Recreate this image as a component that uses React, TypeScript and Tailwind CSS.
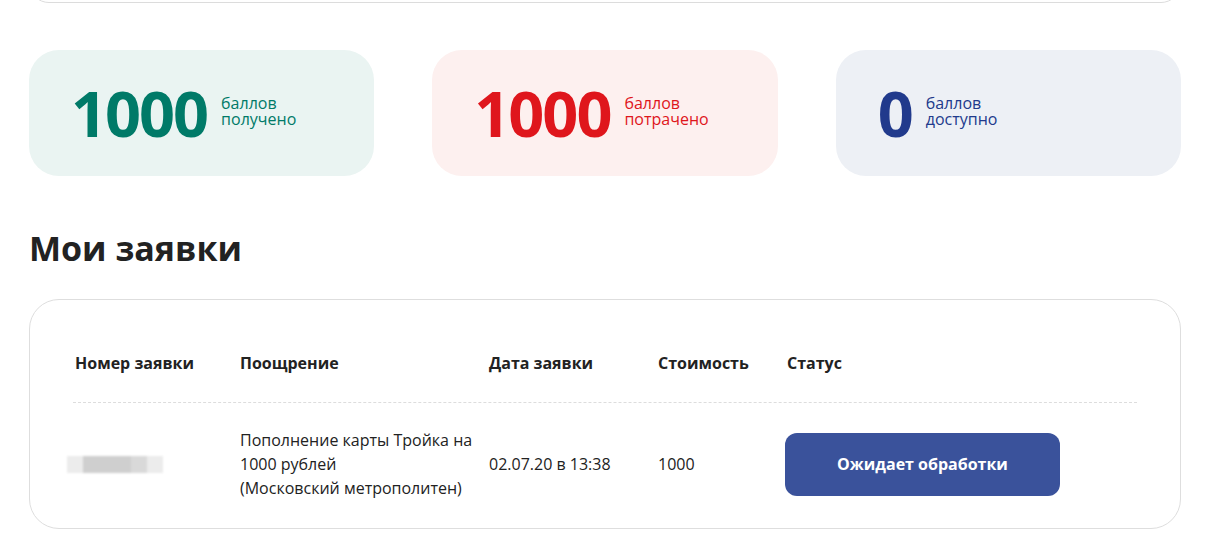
import React from 'react';

const stats = [
  { value: '1000', top: 'баллов', bottom: 'получено', bg: 'bg-[#eaf4f2]', color: 'text-[#007a68]' },
  { value: '1000', top: 'баллов', bottom: 'потрачено', bg: 'bg-[#fdf0ef]', color: 'text-[#df161c]' },
  { value: '0', top: 'баллов', bottom: 'доступно', bg: 'bg-[#edf0f5]', color: 'text-[#213a8c]' },
];

function StatCard({ value, top, bottom, bg, color }: (typeof stats)[number]) {
  return (
    <div className={`h-[126px] rounded-[30px] ${bg} flex items-center pl-[42px]`}>
      <div className={`flex items-start ${color}`}>
        <span className="text-[63px] leading-[64px] font-bold tracking-[-2px]">{value}</span>
        <span className="ml-[14px] mt-[14px] text-[16px] leading-[16px]">
          {top}
          <br />
          {bottom}
        </span>
      </div>
    </div>
  );
}

export default function App() {
  return (
    <div className="min-h-screen bg-white font-['Open_Sans',sans-serif] text-[#222]">
      <div className="pl-[29px] pr-[34px] w-[1215px]">
        <div className="h-[3px] overflow-hidden">
          <div className="h-[40px] -mt-[37px] border border-[#dcdcdc] rounded-[30px]" />
        </div>

        <div className="mt-[47px] grid grid-cols-3 gap-[58px]">
          {stats.map((s, i) => (
            <StatCard key={i} {...s} />
          ))}
        </div>

        <h2 className="mt-[51px] text-[34px] leading-[42px] font-bold text-[#222]">Мои заявки</h2>

        <div className="mt-[30px] border border-[#dedede] rounded-[30px] px-[43px] pt-[51px] pb-[28px]">
          <div className="grid grid-cols-[166px_249px_169px_129px_1fr] text-[16px] leading-[24px] font-bold pb-[27px] border-b border-dashed border-[#dddddd] pl-[1px]">
            <div className="pl-[1px]">Номер заявки</div>
            <div>Поощрение</div>
            <div>Дата заявки</div>
            <div>Стоимость</div>
            <div>Статус</div>
          </div>
          <div className="grid grid-cols-[166px_249px_169px_129px_1fr] items-center text-[16px] leading-[24px] pt-[25px] pl-[1px]">
            <div>
              <div className="-ml-[7px] flex h-[17px] w-[96px] blur-[1px]">
                <div className="w-[16px] bg-[#ececec]" />
                <div className="w-[48px] bg-[#cfcfcf]" />
                <div className="w-[16px] bg-[#d9d9d9]" />
                <div className="w-[16px] bg-[#ececec]" />
              </div>
            </div>
            <div>
              Пополнение карты Тройка на
              <br />
              1000 рублей
              <br />
              (Московский метрополитен)
            </div>
            <div>02.07.20 в 13:38</div>
            <div>1000</div>
            <div>
              <div className="w-[275px] h-[63px] rounded-[12px] bg-[#3a529b] text-white font-bold flex items-center justify-center -ml-[2px]">
                Ожидает обработки
              </div>
            </div>
          </div>
        </div>
      </div>
    </div>
  );
}
